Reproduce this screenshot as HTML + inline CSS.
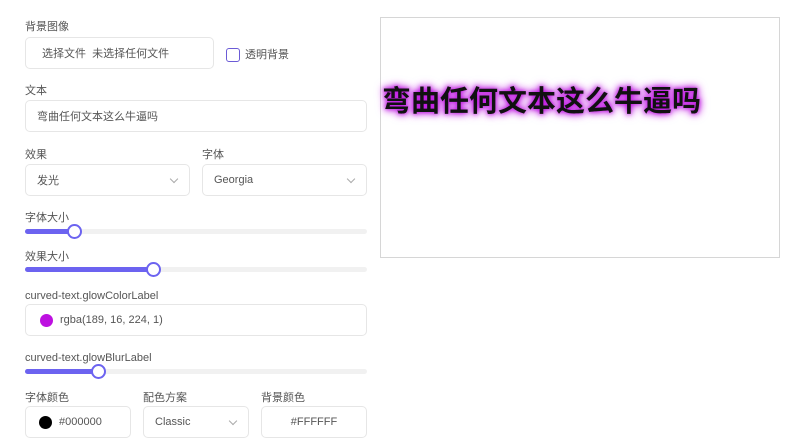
<!DOCTYPE html>
<html><head><meta charset="utf-8"><style>
*{box-sizing:border-box;margin:0;padding:0}
body{width:800px;height:446px;background:#fff;font-family:"Liberation Sans","Noto Sans CJK SC",sans-serif;color:#333;position:relative;overflow:hidden}
.a{position:absolute}
.lbl{position:absolute;font-size:11px;color:#555;line-height:14px}
.box{position:absolute;border:1px solid #e6e6e6;border-radius:5px;height:32px;font-size:11px;color:#555;display:flex;align-items:center}
.track{position:absolute;left:25px;width:342px;height:5px;background:#f1f1f1;border-radius:3px}
.fill{position:absolute;left:0;top:0;height:5px;background:#6c63f0;border-radius:3px}
.thumb{position:absolute;top:-5px;width:15px;height:15px;border:2px solid #6c63f0;background:#fff;border-radius:50%}
.chev{position:absolute;right:12px;top:11px;width:6px;height:6px;border-right:1px solid #aaa;border-bottom:1px solid #aaa;transform:rotate(45deg)}
</style></head><body>
<div class="lbl" style="left:25px;top:20px">背景图像</div>
<div class="box" style="left:25px;top:37px;width:189px;padding-left:16px">选择文件&nbsp;&nbsp;未选择任何文件</div>
<div class="a" style="left:226px;top:48px;width:14px;height:14px;border:1.5px solid #6b5bd6;border-radius:3px"></div>
<div class="lbl" style="left:245px;top:48px">透明背景</div>

<div class="lbl" style="left:25px;top:84px">文本</div>
<div class="box" style="left:25px;top:100px;width:342px;padding-left:11px">弯曲任何文本这么牛逼吗</div>

<div class="lbl" style="left:25px;top:148px">效果</div>
<div class="lbl" style="left:202px;top:148px">字体</div>
<div class="box" style="left:25px;top:164px;width:165px;padding-left:11px">发光<span class="chev"></span></div>
<div class="box" style="left:202px;top:164px;width:165px;padding-left:11px">Georgia<span class="chev"></span></div>

<div class="lbl" style="left:25px;top:211px">字体大小</div>
<div class="track" style="top:229px"><div class="fill" style="width:50px"></div><div class="thumb" style="left:42px"></div></div>

<div class="lbl" style="left:25px;top:250px">效果大小</div>
<div class="track" style="top:267px"><div class="fill" style="width:128px"></div><div class="thumb" style="left:121px"></div></div>

<div class="lbl" style="left:25px;top:289px">curved-text.glowColorLabel</div>
<div class="box" style="left:25px;top:304px;width:342px;padding-left:14px"><span style="display:inline-block;width:13px;height:13px;border-radius:50%;background:#bd10e0;margin-right:7px"></span>rgba(189, 16, 224, 1)</div>

<div class="lbl" style="left:25px;top:351px">curved-text.glowBlurLabel</div>
<div class="track" style="top:369px"><div class="fill" style="width:73px"></div><div class="thumb" style="left:66px"></div></div>

<div class="lbl" style="left:25px;top:391px">字体颜色</div>
<div class="lbl" style="left:143px;top:391px">配色方案</div>
<div class="lbl" style="left:261px;top:391px">背景颜色</div>
<div class="box" style="left:25px;top:406px;width:106px;padding-left:13px"><span style="display:inline-block;width:13px;height:13px;border-radius:50%;background:#000;margin-right:7px"></span>#000000</div>
<div class="box" style="left:143px;top:406px;width:106px;padding-left:11px">Classic<span class="chev"></span></div>
<div class="box" style="left:261px;top:406px;width:106px;justify-content:center">#FFFFFF</div>

<div class="a" style="left:380px;top:17px;width:400px;height:241px;border:1px solid #d6d6d6"></div>
<div class="a" style="left:382px;top:85px;font-size:29px;line-height:34px;font-weight:bold;color:#111;white-space:nowrap;text-shadow:0 0 4px #bd10e0,0 0 8px #bd10e0,0 0 10px rgba(189,16,224,.6)">弯曲任何文本这么牛逼吗</div>
</body></html>
